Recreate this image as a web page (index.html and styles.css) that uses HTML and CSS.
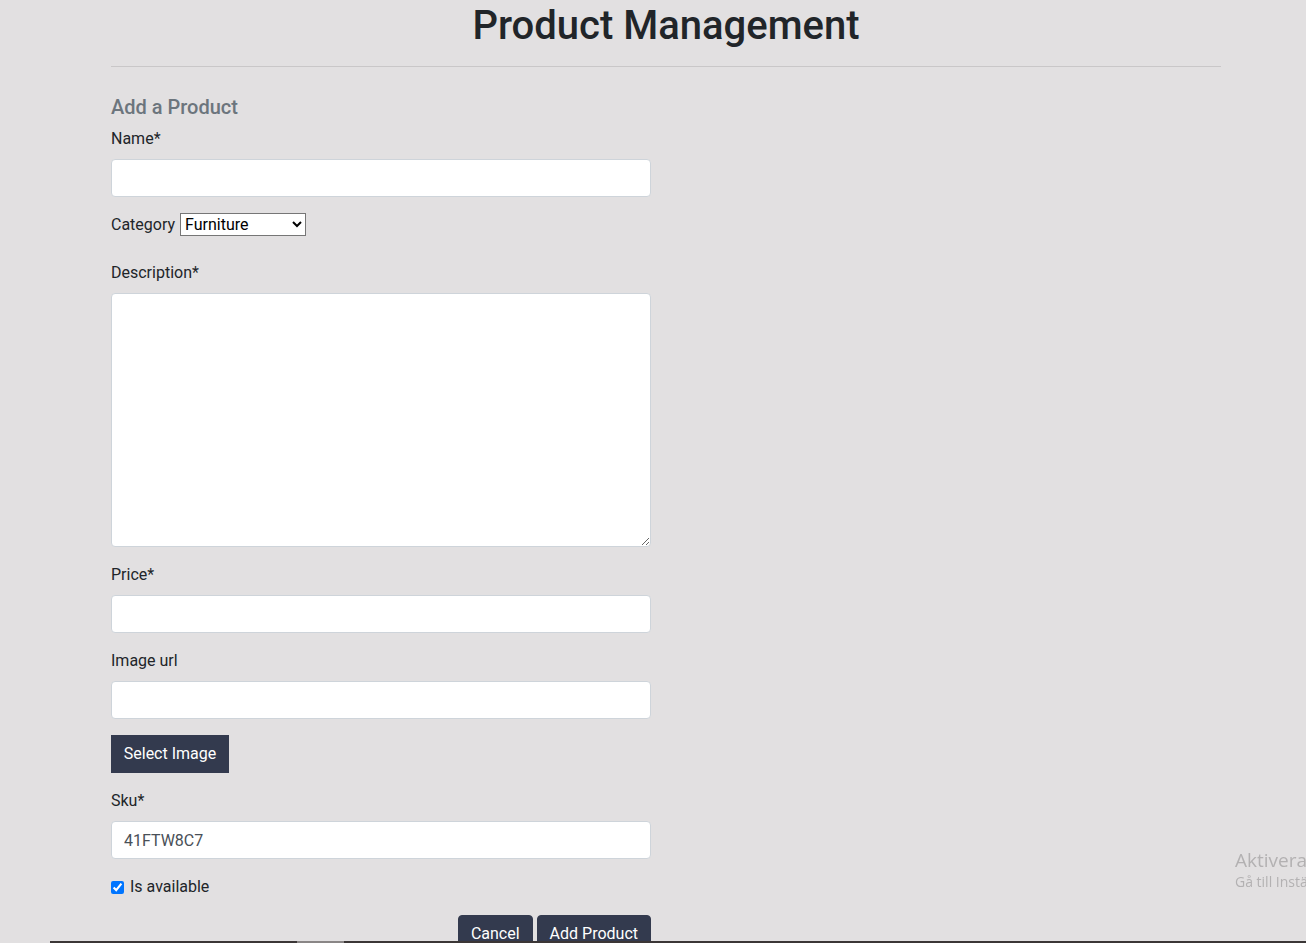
FILE: index.html
```html
<!DOCTYPE html>
<html lang="en">
<head>
<meta charset="utf-8">
<title>Product Management</title>
<link rel="stylesheet" href="styles.css">
</head>
<body>
<div class="container">
  <h1 class="page-title">Product Management</h1>
  <hr class="divider">
  <form class="product-form">
    <h5 class="form-title">Add a Product</h5>
    <div class="form-group">
      <label class="label">Name*</label>
      <input class="form-control" type="text">
    </div>
    <div class="form-group inline-group">
      <label class="label">Category</label>
      <select class="category-select">
        <option>Furniture</option>
        <option>Electronics</option>
        <option>Clothing</option>
      </select>
    </div>
    <div class="form-group">
      <label class="label">Description*</label>
      <textarea class="form-control textarea"></textarea>
    </div>
    <div class="form-group">
      <label class="label">Price*</label>
      <input class="form-control" type="text">
    </div>
    <div class="form-group">
      <label class="label">Image url</label>
      <input class="form-control" type="text">
    </div>
    <div class="form-group">
      <button type="button" class="btn btn-square">Select Image</button>
    </div>
    <div class="form-group">
      <label class="label">Sku*</label>
      <input class="form-control" type="text" value="41FTW8C7">
    </div>
    <div class="form-group check-row">
      <input class="check" type="checkbox" checked id="avail">
      <label class="check-label" for="avail">Is available</label>
    </div>
    <div class="actions">
      <button type="button" class="btn">Cancel</button>
      <button type="button" class="btn">Add Product</button>
    </div>
  </form>
</div>
<div class="watermark">
  <div class="wm-title">Aktivera Windows</div>
  <div class="wm-sub">Gå till Inställningar för att aktivera Windows.</div>
</div>
<div class="taskbar-edge"><span class="seg"></span></div>
</body>
</html>
```
FILE: styles.css
```css
html, body {
  margin: 0;
  padding: 0;
  overflow: hidden;
  height: 100%;
}
body {
  background: #e2e0e1;
  font-family: Roboto, "Liberation Sans", sans-serif;
  font-size: 16px;
  line-height: 1.5;
  color: #212529;
}
.container {
  width: 1110px;
  margin-left: 111px;
}
.page-title {
  font-size: 40px;
  font-weight: 500;
  line-height: 1.2;
  text-align: center;
  margin: 2px 0 0;
  color: #212529;
}
.divider {
  border: 0;
  border-top: 1px solid #c9c7c8;
  margin: 16px 0 0;
}
.product-form {
  width: 540px;
  display: flex;
  flex-direction: column;
}
.form-title {
  font-size: 20px;
  font-weight: 500;
  line-height: 1.2;
  color: #6c757d;
  margin: 28px 0 8px;
}
.form-group {
  margin-bottom: 16px;
}
.label {
  display: inline-block;
  margin-bottom: 8px;
}
.form-control {
  display: block;
  box-sizing: border-box;
  width: 100%;
  height: 38px;
  padding: 6px 12px;
  font-family: Roboto, "Liberation Sans", sans-serif;
  font-size: 16px;
  line-height: 1.5;
  color: #495057;
  background: #fff;
  border: 1px solid #ced4da;
  border-radius: 4px;
  margin: 0;
}
.textarea {
  height: 254px;
  resize: vertical;
}
.category-select {
  width: 126px;
  height: 23px;
  font-family: Roboto, "Liberation Sans", sans-serif;
  font-size: 16px;
  color: #000;
  background: #fff;
  border: 1px solid #767676;
  border-radius: 0;
  padding: 0;
  margin-left: 1px;
}
.btn {
  font-family: Roboto, "Liberation Sans", sans-serif;
  font-size: 16px;
  line-height: 1.5;
  color: #fff;
  background: #333a4e;
  border: 1px solid #333a4e;
  border-radius: 4px;
  padding: 6px 12px;
  height: 38px;
  cursor: pointer;
}
.btn-square {
  border-radius: 0;
  width: 118px;
  padding: 6px 0;
}
.check-row {
  display: flex;
  align-items: center;
  gap: 6px;
  height: 24px;
}
.check {
  margin: 0;
  width: 13px;
  height: 13px;
}
.actions {
  display: flex;
  justify-content: flex-end;
  gap: 4px;
}
.watermark {
  position: fixed;
  left: 1235px;
  top: 848px;
  white-space: nowrap;
  color: #b3b1b2;
  font-family: "Open Sans", "Noto Sans", sans-serif;
}
.wm-title {
  font-size: 19px;
  line-height: 24px;
}
.wm-sub {
  font-size: 14px;
  line-height: 20px;
}
.taskbar-edge {
  position: fixed;
  left: 50px;
  right: 0;
  bottom: 0;
  height: 2px;
  background: #3b3636;
}
.seg {
  display: block;
  margin-left: 247px;
  width: 47px;
  height: 2px;
  background: #8a8686;
}
```
